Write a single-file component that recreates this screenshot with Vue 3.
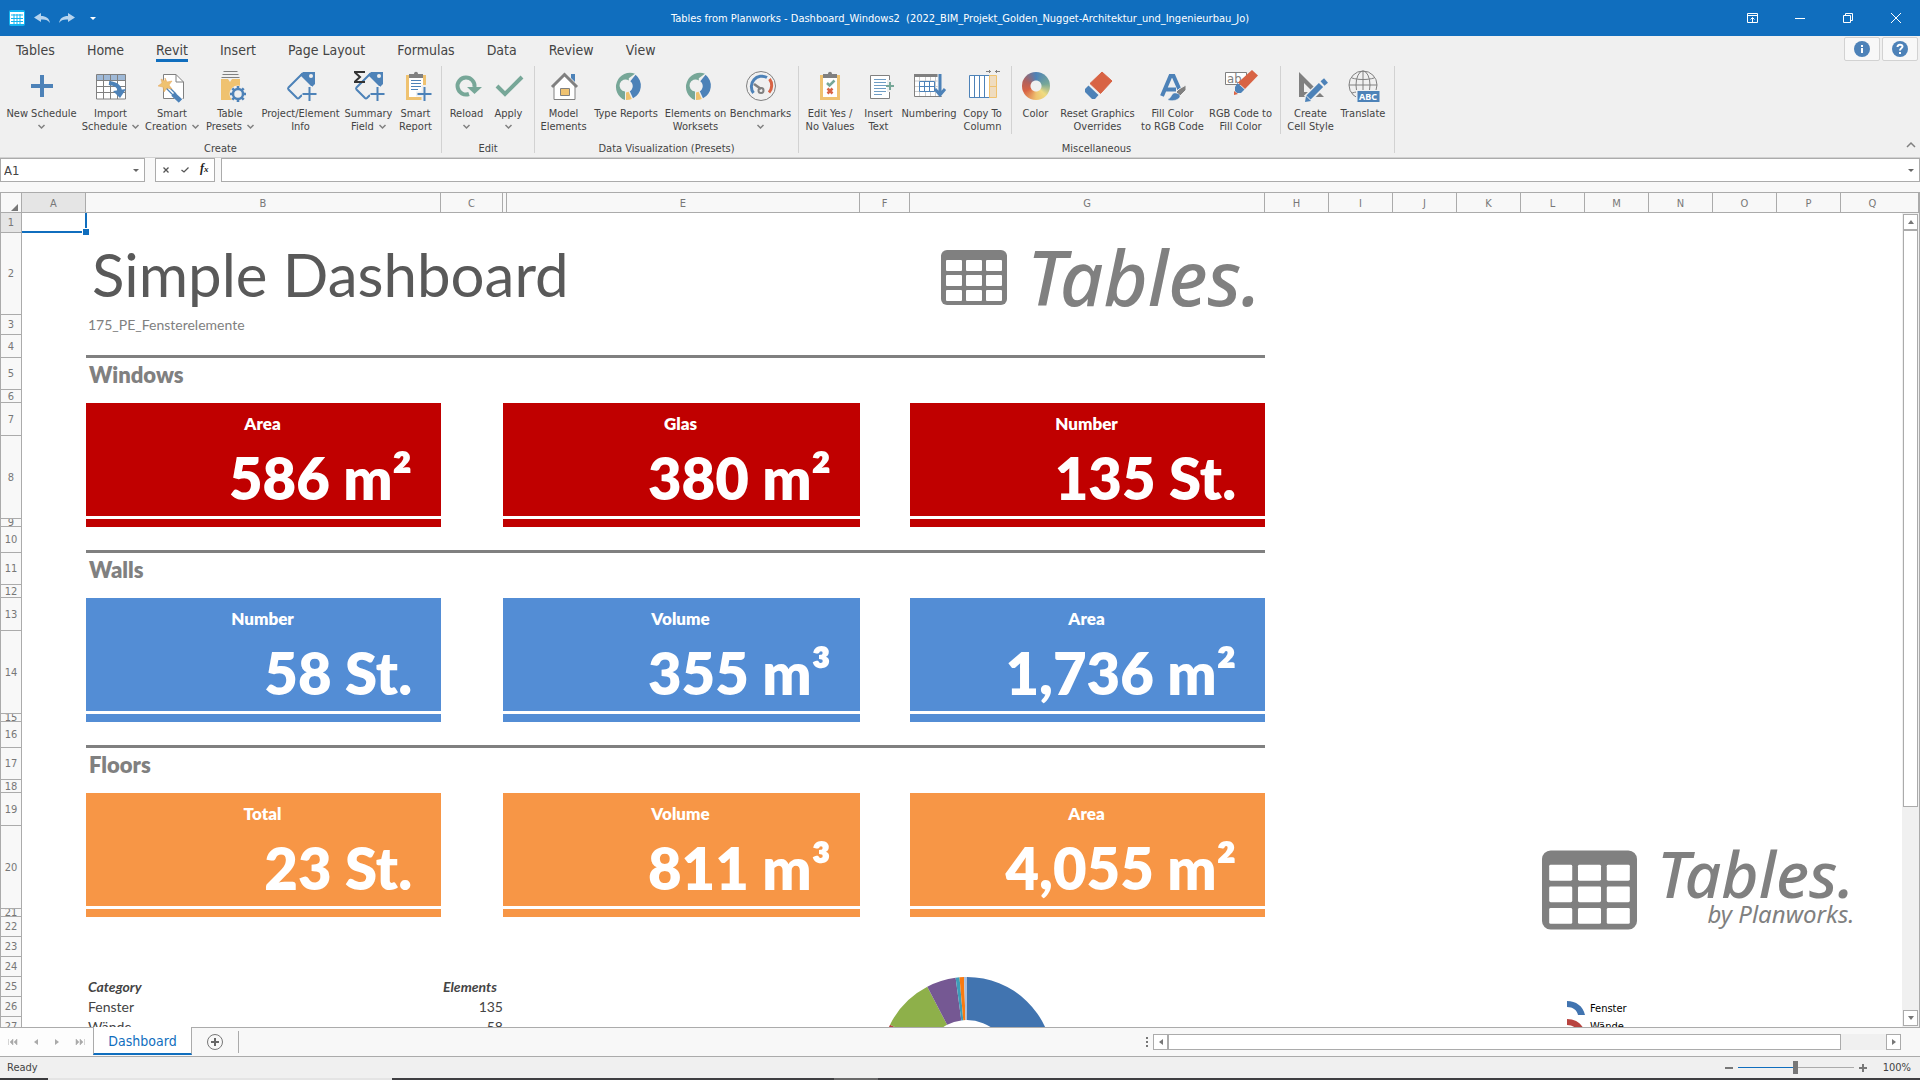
<script setup>
import { ref } from 'vue'

const tabs = ['Tables', 'Home', 'Revit', 'Insert', 'Page Layout', 'Formulas', 'Data', 'Review', 'View']
const activeTab = ref('Revit')
const cellRef = ref('A1')
const formula = ref('')
const zoom = ref(100)

const B = '#4d82b8'
const G = '#808080'
const T = '#77a798'
const Y = '#efc270'
const R = '#d86344'

const donut = `
<path d="M18.8 8.2 25 3.8A14 14 0 1 0 15 30V21.5A6 6 0 1 1 18.8 10.5Z" fill="${T}"/>
<path d="M25.6 4.8A14 14 0 0 1 23 28.3L19.8 21.2A6 6 0 0 0 20.3 11.2Z" fill="${B}"/>
<path d="M16 22.5 18.6 21.8 21.8 29A14 14 0 0 1 16 30Z" fill="${Y}"/>`

const tag = `
<path d="M17.5 3.5 3.5 17.5a1.5 1.5 0 0 0 0 2L12 28a1.5 1.5 0 0 0 2 0L17 25" fill="none" stroke="${B}" stroke-width="2"/>
<path d="M18 2H30V14L27 17 15 5Z" fill="${B}"/><circle cx="26" cy="6" r="2" fill="#efefef"/>
<path d="M24.5 16v15M17 24h15" stroke="#efefef" stroke-width="5"/>
<path d="M24.5 17v14M17.5 24h14" stroke="${B}" stroke-width="2"/>`

const clipboard = `
<path d="M6 5v25h20V5h-3v3H9V5Z" fill="${Y}"/><path d="M9 8h14v19H9Z" fill="#fff"/>
<path d="M9 4h5c0-3 4-3 4 0h5v4H9Z" fill="${G}"/>`

const icons = {
  plus: `<path d="M16 5v22M5 16h22" stroke="${B}" stroke-width="4"/>`,
  import: `
<path d="M2 5h28v24H2Z" fill="#fff"/><path d="M2 5h28v6H2Z" fill="#9fb9d7"/>
<path d="M2 4.500h28.500v24.500H1.500V4.500ZM2 10.500h28M2 16.500h28M2 22.500h28M8.500 5v24M15.500 5v24M22.500 5v24" fill="none" stroke="${G}"/>
<path d="M14 13c8 1 11 4 11 9" fill="none" stroke="${B}" stroke-width="4"/><path d="M18 21l7 7 6-9Z" fill="${B}"/>`,
  wand: `
<path d="M7.500 4.500H20l7.500 7.500v16.500H7.500Z" fill="#fff" stroke="${G}"/><path d="M20 4.500V12h7.500" fill="none" stroke="${G}"/>
<path d="M11 17 25 31" stroke="#fff" stroke-width="6"/>
<path d="M11 17l8 8" stroke="${B}" stroke-width="4"/><path d="M12 18l6 6" stroke="#fff" stroke-width="1.500"/>
<path d="M17 24l7.500 7" stroke="${B}" stroke-width="5"/>
<path d="M9 8l2 4 5-1-3 4 3 4-5-1-3 4-1-5-5-1 4-3-1-4 4 2Z" fill="${Y}" stroke="#e5a45a" stroke-width=".5"/>`,
  presets: `
<path d="M9.500 1.500h14M8.500 4.500h16M7.500 7.500h18" stroke="${G}"/>
<path d="M7 9h7l2 3 2-3h8v21H7Z" fill="${Y}"/><circle cx="24" cy="24" r="8.500" fill="#efefef"/>
<circle cx="24" cy="24" r="5" fill="none" stroke="${B}" stroke-width="2.500"/>
<path d="M24 16v3M24 29v3M16 24h3M29 24h3M18.300 18.300l2 2M27.700 27.700l2 2M29.700 18.300l-2 2M18.300 29.700l2-2" stroke="${B}" stroke-width="2.600"/>`,
  tag,
  sigma: `${tag}<path d="M1 2h11M1 12h11M2 2.500l5 4.500-5 4.500" fill="none" stroke="#333" stroke-width="2"/>`,
  report: `${clipboard}
<path d="M11 10.500h10M11 13.500h10M11 16.500h10M11 19.500h7" stroke="${B}"/>
<path d="M24 15v16M16 24h16" stroke="#efefef" stroke-width="5"/><path d="M24.500 17v14M17.500 24h14" stroke="${B}" stroke-width="2"/>`,
  reload: `<path d="M18 24A8.500 8.500 0 1 1 23.500 17" fill="none" stroke="${T}" stroke-width="4"/><path d="M16 17h15l-7.500 7Z" fill="${T}"/>`,
  apply: `<path d="M4 16l8 8L29 7" fill="none" stroke="${T}" stroke-width="4"/>`,
  house: `
<path d="M23 4h4v8l-4-4Z" fill="${B}"/><path d="M6 15 16.500 5 27 15v14.500H6Z" fill="#fff" stroke="${G}"/>
<path d="M4 17 16.500 4.500 29 17" fill="none" stroke="${G}" stroke-width="3"/><path d="M12.500 18.500h9v7h-9Z" fill="${Y}" stroke="${G}"/>`,
  donut,
  gauge: `
<circle cx="16" cy="16" r="14.500" fill="none" stroke="${G}"/>
<path d="M8.500 23A10.500 10.500 0 0 1 22 7.500" fill="none" stroke="${B}" stroke-width="3"/>
<path d="M24.500 9A10.500 10.500 0 0 1 24 22.500" fill="none" stroke="${R}" stroke-width="3"/>
<path d="M9 14l7 5" stroke="${G}" stroke-width="2.500"/><circle cx="16" cy="20.500" r="2.500" fill="none" stroke="${G}" stroke-width="2"/>`,
  yesno: `${clipboard}
<path d="M13 13l2.500 2.500 5-5" fill="none" stroke="${T}" stroke-width="2.500"/><path d="M13.500 18.500l5 5M18.500 18.500l-5 5" stroke="${R}" stroke-width="2.500"/>`,
  text: `
<path d="M7.500 5.500h19v23h-19Z" fill="#fff" stroke="${G}"/>
<path d="M11 9.500h12M11 12.500h12M11 15.500h12M11 18.500h12M11 21.500h12M11 24.500h8" stroke="#6f9dc4"/>
<path d="M27 10v12" stroke="#efefef" stroke-width="6"/><path d="M27 12v8M23 16h8" stroke="${T}" stroke-width="2"/>`,
  number: `
<path d="M1.500 5.500h27v21h-27Z" fill="#fff" stroke="${G}"/><path d="M6.500 6v20M12.500 6v20M17.500 6v20M22.500 6v20M2 11h26M2 16.500h26M2 21.500h26" stroke="#ccc"/>
<path d="M1 4h24v3H1Z" fill="${G}"/><path d="M6.500 11.500h15v10h-15ZM6.500 16.500h15M11.500 11.500v10M16.500 11.500v10" fill="#fff" stroke="${B}"/>
<path d="M27 4v22" stroke="#efefef" stroke-width="5"/><path d="M27 4v21M22 19l5 6 5-6" fill="none" stroke="${B}" stroke-width="3"/>`,
  column: `
<path d="M2.500 5.500h20v22h-20ZM7.500 5.500v22M12.500 5.500v22M17.500 5.500v22" fill="#fff" stroke="${B}"/>
<path d="M22.500 5.500h7v22h-7ZM22.500 16.500h7" fill="#efdcc0" stroke="${Y}"/>
<path d="M19 1.500h5M28 1.500h5M22.500 0v3M29.500 0v3" stroke="${G}"/>`,
  eraser: `<path d="M20 2 30 11 18.500 23.500 8 13.500Z" fill="${R}" stroke="${R}" stroke-linejoin="round"/><path d="M6.500 15.500 16.500 25 13 29H10L3 22V19Z" fill="${B}"/>`,
  fill: `
<path d="M5 26 13.500 6h3L24 23M9 19.500h10" fill="none" stroke="${B}" stroke-width="4"/>
<path d="M29 15v5l-6 6-4-4 3-3Z" fill="${G}" stroke="#efefef"/><path d="M11 29c4-1 3-7 8-6 5 1 5 4 2 6-3 2-7 2-10 1Z" fill="${B}" stroke="#efefef" stroke-width=".5"/>`,
  marker: `
<path d="M.5 2.500h21v12H.5Z" fill="#fff" stroke="${G}"/><text x="2" y="13" font-size="13" font-family="DejaVu Sans Condensed, sans-serif" fill="${G}">ab</text>
<path d="M27 0 33 5.500 20 19l-7-6.500Z" fill="${R}"/><path d="M12.500 13 19.500 19.500 16 23H12l-2-2v-4Z" fill="${B}"/><path d="M9 21l4 3-4 1Z" fill="${R}"/>`,
  style: `
<path d="M4 2V27H29ZM9 13v9h9Z" fill="${G}" fill-rule="evenodd"/><path d="M12 29 31 11" stroke="#efefef" stroke-width="9"/>
<path d="M13.500 27.500 26 15" stroke="${B}" stroke-width="6"/><path d="M27.500 13.500 31 10.500" stroke="${B}" stroke-width="6"/><path d="M10 32l1-6 5 5Z" fill="${B}"/>`,
  globe: `
<g fill="none" stroke="${G}"><circle cx="16" cy="15" r="14"/><ellipse cx="16" cy="15" rx="7" ry="14"/><path d="M16 1v28M2 15h28M5 8c6 2 16 2 22 0M5 23c6-2 16-2 22 0"/></g>
<path d="M9 20h24v12H9Z" fill="#efefef"/><path d="M10.500 21h22v11h-22Z" fill="${B}"/>
<text x="12" y="30" font-size="9" font-weight="700" font-family="Noto Sans, sans-serif" fill="#fff">ABC</text>`
}

const groups = [
  {
    name: 'Create',
    parts: [[
      { l: ['New Schedule'], w: 75, i: 'plus', d: true },
      { l: ['Import', 'Schedule'], w: 63, i: 'import', d: true },
      { l: ['Smart', 'Creation'], w: 60, i: 'wand', d: true },
      { l: ['Table', 'Presets'], w: 56, i: 'presets', d: true },
      { l: ['Project/Element', 'Info'], w: 85, i: 'tag' },
      { l: ['Summary', 'Field'], w: 51, i: 'sigma', d: true },
      { l: ['Smart', 'Report'], w: 43, i: 'report' }
    ]]
  },
  { name: 'Edit', parts: [[{ l: ['Reload'], w: 41, i: 'reload', d: true }, { l: ['Apply'], w: 43, i: 'apply', d: true }]] },
  {
    name: 'Data Visualization (Presets)',
    parts: [[
      { l: ['Model', 'Elements'], w: 49, i: 'house' },
      { l: ['Type Reports'], w: 76, i: 'donut' },
      { l: ['Elements on', 'Worksets'], w: 63, i: 'donut' },
      { l: ['Benchmarks'], w: 67, i: 'gauge', d: true }
    ]]
  },
  {
    name: 'Miscellaneous',
    parts: [
      [
        { l: ['Edit Yes /', 'No Values'], w: 54, i: 'yesno' },
        { l: ['Insert', 'Text'], w: 43, i: 'text' },
        { l: ['Numbering'], w: 58, i: 'number' },
        { l: ['Copy To', 'Column'], w: 49, i: 'column' }
      ],
      [
        { l: ['Color'], w: 39, i: 'wheel' },
        { l: ['Reset Graphics', 'Overrides'], w: 85, i: 'eraser' },
        { l: ['Fill Color', 'to RGB Code'], w: 65, i: 'fill' },
        { l: ['RGB Code to', 'Fill Color'], w: 71, i: 'marker' }
      ],
      [
        { l: ['Create', 'Cell Style'], w: 51, i: 'style' },
        { l: ['Translate'], w: 54, i: 'globe' }
      ]
    ]
  }
]

const columns = [
  ['A', 64], ['B', 355], ['C', 62], ['', 4], ['E', 353], ['F', 50], ['G', 355],
  ['H', 64], ['I', 64], ['J', 64], ['K', 64], ['L', 64], ['M', 64], ['N', 64], ['O', 64], ['P', 64], ['Q', 0]
]

const section = (name, color, cards, first) => [
  { h: 32, k: 'section', v: name },
  { h: 13, k: 'blank' },
  { h: 33, k: 'cards', part: 'label', color, v: cards.map(c => c[0]) },
  { h: 83, k: 'cards', part: 'value', color, v: cards.map(c => c[1]) },
  { h: 8, k: 'cards', part: 'foot', color, v: ['', '', ''] },
  { h: first, k: first > 20 ? 'rule' : 'blank' }
]

const rows = [
  { h: 20, k: 'blank' },
  { h: 82, k: 'title', v: 'Simple Dashboard' },
  { h: 20, k: 'note', v: '175_PE_Fensterelemente' },
  { h: 23, k: 'rule' },
  ...section('Windows', 'red', [['Area', '586 m²'], ['Glas', '380 m²'], ['Number', '135 St.']], 26),
  ...section('Walls', 'blue', [['Number', '58 St.'], ['Volume', '355 m³'], ['Area', '1,736 m²']], 26),
  ...section('Floors', 'orange', [['Total', '23 St.'], ['Volume', '811 m³'], ['Area', '4,055 m²']], 20),
  { h: 20, k: 'blank' },
  { h: 20, k: 'blank' },
  { h: 20, k: 'head', v: ['Category', 'Elements'] },
  { h: 20, k: 'data', v: ['Fenster', '135'] },
  { h: 20, k: 'data', v: ['Wände', '58'] }
]

const polar = (deg, r) => {
  const a = (deg * Math.PI) / 180
  return `${90 + r * Math.sin(a)} ${90 - r * Math.cos(a)}`
}
const arc = (from, to) =>
  `M${polar(from, 86)}A86 86 0 0 1 ${polar(to, 86)}L${polar(to, 43)}A43 43 0 0 0 ${polar(from, 43)}Z`
const slices = [
  { c: '#4174b0', d: arc(0, 176) },
  { c: '#b8433f', d: arc(176, 296.500) },
  { c: '#8eb04a', d: arc(296.500, 332.500) },
  { c: '#755893', d: arc(332.500, 352.400) },
  { c: '#3d9db8', d: arc(352.400, 355) },
  { c: '#f97a10', d: arc(355, 358) },
  { c: '#a9c0de', d: arc(358, 360) }
]
const logoCells = [0, 1, 2].flatMap(r => [0, 1, 2].map(c => ({ x: 5 + c * 20, y: 10 + r * 15 })))
</script>

<template>
  <div class="app">
    <header class="titlebar">
      <div class="quick">
        <svg width="16" height="16" viewBox="0 0 16 16"><rect width="16" height="16" rx="2" fill="#12b5f2" /><path d="M1 2h14v12H1Z" fill="#fff" /><path d="M2 5h12M2 8.500h12M2 11.500h12M5 4v10M8 4v10M11 4v10" stroke="#12b5f2" /></svg>
        <button aria-label="Undo"><svg width="16" height="10" viewBox="0 0 16 10"><path d="M0 4.500 7 0v3c5 0 8 2 9 7-2-3-5-4-9-3.500V9Z" fill="#b5d3ee" /></svg></button>
        <button aria-label="Redo"><svg width="16" height="10" viewBox="0 0 16 10"><path d="M16 4.500 9 0v3C4 3 1 5 0 10c2-3 5-4 9-3.500V9Z" fill="#b5d3ee" /></svg></button>
        <button aria-label="Customize" class="more"><svg width="6" height="3"><path d="M0 0h6L3 3Z" fill="#fff" /></svg></button>
      </div>
      <h1>Tables from Planworks - Dashboard_Windows2&nbsp; (2022_BIM_Projekt_Golden_Nugget-Architektur_und_Ingenieurbau_Jo)</h1>
      <div class="window-buttons">
        <button aria-label="Ribbon options"><svg width="11" height="10"><path d="M.5.5h10v9H.5ZM0 2.500h11M5.500 9V4.500M3.500 6.500l2-2 2 2" fill="none" stroke="#fff" /></svg></button>
        <button aria-label="Minimize"><svg width="10" height="10"><path d="M0 5.500h10" stroke="#fff" /></svg></button>
        <button aria-label="Restore"><svg width="10" height="10"><path d="M.5 2.500h7v7h-7ZM2.500 2.500v-2h7v7h-2" fill="none" stroke="#fff" /></svg></button>
        <button aria-label="Close"><svg width="10" height="10"><path d="M0 0l10 10M10 0 0 10" stroke="#fff" /></svg></button>
      </div>
    </header>

    <section class="ribbon">
      <nav class="tabs">
        <button v-for="t in tabs" :key="t" :class="{ active: t === activeTab }" @click="activeTab = t">{{ t }}</button>
        <div class="help">
          <button aria-label="Info"><svg width="16" height="16"><circle cx="8" cy="8" r="8" :fill="B" /><path d="M7 4h2v2H7ZM7 7h2v5H7Z" fill="#fff" /></svg></button>
          <button aria-label="Help"><svg width="16" height="16"><circle cx="8" cy="8" r="8" :fill="B" /><path d="M5.500 6c0-3 5-3 5-.5C10.500 7.500 8 7 8 9.500" fill="none" stroke="#fff" stroke-width="2" /><path d="M7 11h2v2H7Z" fill="#fff" /></svg></button>
        </div>
      </nav>
      <div class="groups">
        <section v-for="g in groups" :key="g.name" class="group">
          <div class="parts">
            <div v-for="(p, n) in g.parts" :key="n" class="part">
              <button v-for="b in p" :key="b.l[0]" class="tool" :style="{ width: b.w + 'px' }">
                <span v-if="b.i === 'wheel'" class="icon"><span class="wheel"></span></span>
                <svg v-else class="icon" viewBox="0 0 32 32" v-html="icons[b.i]"></svg>
                <span class="line">{{ b.l[0] }}</span>
                <span class="line">{{ b.l[1] }}<svg v-if="b.d" :class="{ after: b.l[1] }" width="7" height="5"><path d="M.5 1l3 3 3-3" fill="none" stroke="#808080" stroke-width="1.500" /></svg></span>
              </button>
            </div>
          </div>
          <div class="group-name">{{ g.name }}</div>
        </section>
        <button class="collapse" aria-label="Collapse ribbon"><svg width="10" height="6"><path d="M1 5l4-4 4 4" fill="none" stroke="#808080" stroke-width="1.500" /></svg></button>
      </div>
    </section>

    <div class="formula-bar">
      <div class="name-box">
        <input v-model="cellRef" aria-label="Name box">
        <button aria-label="Names"><svg width="6" height="3"><path d="M0 0h6L3 3Z" fill="#666" /></svg></button>
      </div>
      <div class="formula-buttons">
        <button aria-label="Cancel"><svg width="6" height="6"><path d="M.5.500l5 5M5.500.500l-5 5" stroke="#555" stroke-width="1.300" /></svg></button>
        <button aria-label="Enter"><svg width="8" height="6"><path d="M.5 3l2.500 2L7.500.500" fill="none" stroke="#555" stroke-width="1.300" /></svg></button>
        <button aria-label="Insert function" class="fx">f<sub>x</sub></button>
      </div>
      <div class="formula">
        <input v-model="formula" aria-label="Formula">
        <button aria-label="Expand"><svg width="6" height="3"><path d="M0 0h6L3 3Z" fill="#666" /></svg></button>
      </div>
    </div>

    <main class="sheet">
      <table>
        <colgroup>
          <col class="row-col">
          <col v-for="c in columns" :key="c[0]" :style="c[1] ? { width: c[1] + 'px' } : {}">
        </colgroup>
        <thead>
          <tr>
            <th class="corner"><svg width="7" height="7"><path d="M7 0v7H0Z" fill="#777" /></svg></th>
            <th v-for="c in columns" :key="c[0]" :class="{ current: c[0] === 'A' }">{{ c[0] }}</th>
          </tr>
        </thead>
        <tbody>
          <tr v-for="(r, n) in rows" :key="n" :class="[r.k, r.part, r.color]" :style="{ height: r.h + 'px' }">
            <th :class="{ current: n === 0 }"><div :style="{ height: r.h - 1 + 'px' }"><span>{{ n + 1 }}</span></div></th>
            <td></td>
            <template v-if="r.k === 'cards'">
              <td class="card">{{ r.v[0] }}</td>
              <td></td>
              <td class="card" colspan="2">{{ r.v[1] }}</td>
              <td></td>
              <td class="card">{{ r.v[2] }}</td>
              <td colspan="10"></td>
            </template>
            <template v-else-if="r.k === 'head' || r.k === 'data'">
              <td>{{ r.v[0] }}</td>
              <td class="count">{{ r.v[1] }}</td>
              <td colspan="14"></td>
            </template>
            <template v-else>
              <td class="wide" colspan="6">{{ r.v }}</td>
              <td colspan="10"></td>
            </template>
          </tr>
        </tbody>
      </table>

      <div class="selection"></div>

      <div class="logo logo-small">
        <svg width="66" height="55" viewBox="0 0 66 55"><rect width="66" height="55" rx="6" fill="#808080" /><rect v-for="(c, n) in logoCells" :key="n" :x="c.x" :y="c.y" width="16" height="11" rx="1" fill="#fff" /></svg>
        <span class="word">Tables.</span>
      </div>
      <div class="logo logo-large">
        <svg width="95" height="80" viewBox="0 0 66 55"><rect width="66" height="55" rx="6" fill="#808080" /><rect v-for="(c, n) in logoCells" :key="n" :x="c.x" :y="c.y" width="16" height="11" rx="1" fill="#fff" /></svg>
        <div class="words"><span class="word">Tables.</span><span class="by">by Planworks.</span></div>
      </div>

      <svg class="chart" width="180" height="180"><path v-for="s in slices" :key="s.c" :d="s.d" :fill="s.c" /></svg>
      <ul class="legend">
        <li><svg width="18" height="14"><path d="M0 0C9 0 16 5 18 14H11C10 9 6 6 0 6Z" fill="#4174b0" /></svg>Fenster</li>
        <li><svg width="18" height="14"><path d="M0 0C9 0 16 5 18 14H11C10 9 6 6 0 6Z" fill="#b8433f" /></svg>Wände</li>
      </ul>

      <div class="vscroll">
        <button aria-label="Scroll up"><svg width="6" height="4"><path d="M0 4h6L3 0Z" fill="#777" /></svg></button>
        <div class="thumb"></div>
        <button aria-label="Scroll down"><svg width="6" height="4"><path d="M0 0h6L3 4Z" fill="#777" /></svg></button>
      </div>
    </main>

    <footer class="sheet-tabs">
      <div class="nav">
        <button aria-label="First sheet"><svg width="10" height="6"><path d="M.5 0v6M5 0v6L2 3ZM9 0v6L6 3Z" fill="#aaa" stroke="#aaa" stroke-width=".5" /></svg></button>
        <button aria-label="Previous sheet"><svg width="4" height="6"><path d="M4 0v6L0 3Z" fill="#aaa" /></svg></button>
        <button aria-label="Next sheet"><svg width="4" height="6"><path d="M0 0v6l4-3Z" fill="#aaa" /></svg></button>
        <button aria-label="Last sheet"><svg width="10" height="6"><path d="M9.500 0v6M5 0v6l3-3ZM1 0v6l3-3Z" fill="#aaa" stroke="#aaa" stroke-width=".5" /></svg></button>
      </div>
      <button class="sheet-tab">Dashboard</button>
      <button class="add" aria-label="Add sheet"><svg width="16" height="16"><circle cx="8" cy="8" r="7.500" fill="none" stroke="#777" /><path d="M8 4v8M4 8h8" stroke="#666" stroke-width="2" /></svg></button>
      <div class="divider"></div>
      <div class="hscroll-wrap">
        <svg width="2" height="10"><path d="M0 0h2v2H0ZM0 4h2v2H0ZM0 8h2v2H0Z" fill="#777" /></svg>
        <div class="hscroll">
          <button aria-label="Scroll left"><svg width="4" height="6"><path d="M4 0v6L0 3Z" fill="#777" /></svg></button>
          <div class="thumb"></div>
          <button aria-label="Scroll right"><svg width="4" height="6"><path d="M0 0v6l4-3Z" fill="#777" /></svg></button>
        </div>
      </div>
    </footer>

    <div class="status">
      <span>Ready</span>
      <div class="zoom">
        <button aria-label="Zoom out"><svg width="8" height="8"><path d="M0 4h8" stroke="#777" stroke-width="2" /></svg></button>
        <input v-model="zoom" type="range" min="0" max="200" aria-label="Zoom">
        <button aria-label="Zoom in"><svg width="8" height="8"><path d="M0 4h8M4 0v8" stroke="#777" stroke-width="2" /></svg></button>
        <output>{{ zoom }}%</output>
      </div>
    </div>
    <div class="taskbar-edge"></div>
  </div>
</template>

<style>
body {
  margin: 0;
  overflow: hidden;
}
</style>

<style scoped>
.app {
  display: flex;
  flex-direction: column;
  height: 100vh;
  background: #f8f8f8;
  color: #444;
  font: 11px/13px "DejaVu Sans Condensed", "DejaVu Sans", sans-serif;
}
.app * {
  box-sizing: border-box;
}
button {
  display: flex;
  align-items: center;
  justify-content: center;
  padding: 0;
  border: 0;
  background: none;
  color: inherit;
  font: inherit;
}
input {
  min-width: 0;
  border: 0;
  outline: 0;
  padding: 0;
  background: none;
  color: inherit;
  font: inherit;
}
svg {
  flex: none;
  overflow: visible;
}

.titlebar {
  display: grid;
  grid-template-columns: 1fr auto 1fr;
  align-items: center;
  flex: none;
  height: 36px;
  background: #106ebe;
  color: #fff;
}
.titlebar h1 {
  margin: 0;
  font-size: 11px;
  font-weight: 400;
}
.quick {
  display: flex;
  align-items: center;
  gap: 9px;
  padding-left: 9px;
}
.quick .more {
  padding-left: 6px;
}
.window-buttons {
  display: flex;
  justify-content: flex-end;
}
.window-buttons button {
  width: 48px;
  height: 36px;
}

.ribbon {
  flex: none;
  height: 122px;
  background: #f0f0f0;
  border-bottom: 1px solid #d2d2d2;
}
.tabs {
  display: flex;
  gap: 32px;
  height: 30px;
  padding: 0 2px 0 16px;
  font-size: 14px;
}
.tabs > button {
  height: 26px;
  border-bottom: 3px solid transparent;
  padding-top: 5px;
}
.tabs > .active {
  border-color: #106ebe;
}
.help {
  display: flex;
  gap: 2px;
  margin-left: auto;
  padding-top: 1px;
}
.help button {
  width: 36px;
  height: 24px;
  border: 1px solid #d2d2d2;
  border-radius: 2px;
  background: #f8f8f8;
}
.groups {
  display: flex;
  height: 87px;
}
.group {
  display: flex;
  flex-direction: column;
  border-right: 1px solid #d2d2d2;
}
.parts {
  display: flex;
  height: 70px;
}
.part {
  display: flex;
  padding: 4px 4px 0;
}
.part + .part {
  border-left: 1px solid #d2d2d2;
}
.tool {
  flex-direction: column;
  justify-content: flex-start;
  height: 64px;
  white-space: nowrap;
}
.icon {
  flex: none;
  width: 32px;
  height: 32px;
  margin-bottom: 5px;
}
.wheel {
  display: block;
  width: 28px;
  height: 28px;
  margin: 2px;
  border-radius: 50%;
  background: radial-gradient(circle, #f0f0f0 5px, transparent 6px), conic-gradient(#4d82b8, #77a798 22%, #efdb80 37%, #efc270 50%, #d86344 68%, #b0605c 82%, #4d82b8);
}
.line {
  display: flex;
  align-items: center;
  height: 13px;
}
.line .after {
  margin-left: 5px;
}
.group-name {
  padding-top: 8px;
  text-align: center;
}
.collapse {
  align-self: flex-end;
  width: 18px;
  height: 16px;
  margin-left: auto;
}

.formula-bar {
  display: flex;
  flex: none;
  height: 24px;
  margin-bottom: 10px;
  font-size: 13px;
}
.formula-bar > div {
  display: flex;
  border: 1px solid #ababab;
  background: #fff;
}
.formula-bar > div > button {
  width: 16px;
}
.formula-bar .name-box {
  width: 145px;
  margin-right: 10px;
  padding-left: 3px;
}
.formula-bar .formula-buttons {
  justify-content: space-around;
  width: 60px;
  margin-right: 6px;
}
.formula-bar .fx {
  align-items: baseline;
  padding-top: 3px;
  font: italic 700 12px/13px "Liberation Serif", serif;
  color: #222;
}
.fx sub {
  font-size: 9px;
  line-height: 9px;
}
.formula-bar .formula {
  flex: 1;
}
.formula-bar input {
  flex: 1;
}

.sheet {
  position: relative;
  flex: 1;
  min-height: 0;
  overflow: hidden;
  border-right: 1px solid #ababab;
  border-bottom: 1px solid #ababab;
  background: #fff;
}
table {
  width: 100%;
  table-layout: fixed;
  border-spacing: 0;
  font: 14px/18px Lato, sans-serif;
}
th,
td {
  padding: 0;
}
.row-col {
  width: 22px;
}
th {
  border-right: 1px solid #ababab;
  border-bottom: 1px solid #ababab;
  background: #f8f8f8;
  color: #777;
  font: 11px/13px "DejaVu Sans Condensed", "DejaVu Sans", sans-serif;
}
thead th {
  height: 21px;
  padding-top: 1px;
  border-top: 1px solid #ababab;
}
thead th:last-child {
  padding-right: 14px;
}
th:first-child {
  border-left: 1px solid #ababab;
}
th.current {
  background: #e5e5e5;
}
.corner svg {
  display: block;
  margin: 8px 0 0 10px;
}
tbody th div {
  display: flex;
  align-items: center;
  justify-content: center;
  overflow: hidden;
}
td {
  white-space: nowrap;
}
.title .wide {
  padding-left: 6px;
  color: #595959;
  font-size: 60px;
  line-height: 72px;
}
.note .wide {
  padding-left: 2px;
  color: #808080;
}
.rule .wide {
  border-bottom: 3px solid #808080;
}
.section .wide {
  padding: 2px 0 0 3px;
  color: #808080;
  font-size: 22px;
  font-weight: 800;
  line-height: 24px;
}
.card {
  color: #fff;
  font-weight: 800;
}
.red .card {
  background: #c00000;
}
.blue .card {
  background: #538dd5;
}
.orange .card {
  background: #f79646;
}
.label .card {
  padding: 8px 2px 0 0;
  font-size: 17px;
  text-align: center;
}
.value .card {
  padding: 4px 29px 0 0;
  border-bottom: 3px solid #fff;
  font-size: 58px;
  line-height: 72px;
  text-align: right;
}
.foot td {
  line-height: 0;
}
.head td,
.data td {
  padding-left: 2px;
}
.head td {
  font-style: italic;
  font-weight: 700;
}
.data .count {
  text-align: right;
}

.selection {
  position: absolute;
  left: 22px;
  top: 21px;
  width: 65px;
  height: 20px;
  border-right: 2px solid #106ebe;
  border-bottom: 2px solid #106ebe;
}
.selection::after {
  content: "";
  position: absolute;
  right: -4px;
  bottom: -4px;
  width: 6px;
  height: 6px;
  outline: 1px solid #fff;
  background: #106ebe;
}

.logo {
  position: absolute;
  display: flex;
  color: #808080;
  font-family: "Noto Sans", sans-serif;
  font-style: italic;
  font-weight: 500;
}
.logo-small {
  left: 941px;
  top: 58px;
  gap: 20px;
}
.logo-small .word {
  font-size: 76px;
  line-height: 54px;
}
.logo-large {
  left: 1542px;
  top: 658px;
  gap: 20px;
}
.words {
  display: flex;
  flex-direction: column;
  align-items: flex-end;
}
.logo-large .word {
  font-size: 64px;
  line-height: 48px;
}
.by {
  font-size: 24px;
  line-height: 32px;
  font-weight: 400;
}
.chart {
  position: absolute;
  left: 877px;
  top: 781px;
}
.legend {
  position: absolute;
  left: 1567px;
  top: 807px;
  margin: 0;
  padding: 0;
  color: #000;
  list-style: none;
}
.legend li {
  display: flex;
  align-items: center;
  gap: 5px;
  height: 18px;
}
.vscroll {
  position: absolute;
  top: 21px;
  right: 0;
  bottom: 0;
  display: flex;
  flex-direction: column;
  width: 17px;
  padding: 1px;
  background: #f0f0f0;
}
.vscroll button,
.hscroll button {
  flex: none;
  width: 15px;
  height: 16px;
  border: 1px solid #ababab;
  background: #fff;
}
.vscroll button:last-child {
  margin-top: auto;
}
.vscroll .thumb {
  height: 71%;
  border: 1px solid #ababab;
  background: #fff;
}

.sheet-tabs {
  display: flex;
  flex: none;
  align-items: flex-start;
  height: 29px;
  border-bottom: 1px solid #ababab;
}
.nav {
  display: flex;
  align-items: center;
  justify-content: space-around;
  width: 93px;
  height: 28px;
  background: #fdfdfd;
}
.sheet-tab {
  height: 28px;
  width: 99px;
  margin-top: -1px;
  padding-top: 3px;
  position: relative;
  border: 1px solid #ababab;
  border-top: 0;
  border-bottom: 2px solid #106ebe;
  background: #fff;
  color: #106ebe;
  font-size: 14px;
}
.add {
  width: 46px;
  height: 27px;
}
.divider {
  width: 1px;
  height: 22px;
  margin-top: 3px;
  background: #ababab;
}
.hscroll-wrap {
  display: flex;
  flex: none;
  align-items: center;
  gap: 5px;
  width: calc(40% + 6px);
  height: 28px;
  margin-left: auto;
  padding-right: 19px;
}
.hscroll {
  display: flex;
  flex: 1;
  background: #f0f0f0;
}
.hscroll button:last-child {
  margin-left: auto;
}
.hscroll .thumb {
  width: 90%;
  border: 1px solid #ababab;
  background: #fff;
}

.status {
  display: flex;
  flex: none;
  align-items: center;
  justify-content: space-between;
  height: 21px;
  padding: 0 9px 0 7px;
  background: #f0f0f0;
}
.zoom {
  display: flex;
  align-items: center;
  gap: 5px;
}
.zoom input {
  appearance: none;
  width: 116px;
  height: 13px;
  margin: 0;
  background: linear-gradient(90deg, #106ebe 50%, #ababab 50%) center / 100% 1px no-repeat;
}
.zoom input::-webkit-slider-thumb {
  appearance: none;
  width: 5px;
  height: 13px;
  background: #777;
}
.zoom output {
  margin-left: 11px;
}
.taskbar-edge {
  flex: none;
  height: 2px;
  background: linear-gradient(90deg, #3a3a3c 48px, #e4e4e4 48px, #e4e4e4 392px, #3f3f42 392px, #3f3f42 834px, #6a6a6a 834px, #6a6a6a 878px, #3f3f42 878px);
}
</style>
